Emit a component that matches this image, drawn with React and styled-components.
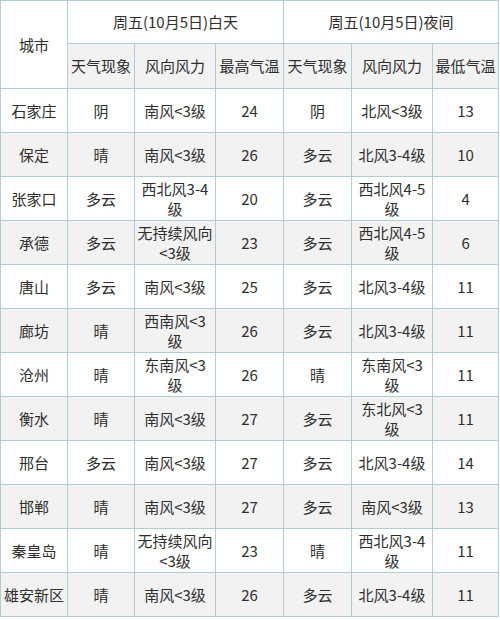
import React from 'react';
import styled, { createGlobalStyle } from 'styled-components';

const GlobalStyle = createGlobalStyle`
    html, body {
        margin: 0;
        padding: 0;
        background: #fff;
    }
`;

const Table = styled.table`
    border-collapse: collapse;
    table-layout: fixed;
    width: 498px;
    font-family: "Noto Sans CJK SC", "Noto Sans", sans-serif;
    font-size: 15px;
    color: #2e2e2e;
`;

const Row = styled.tr`
    height: ${props => props.$h}px;
    background: ${props => props.$grey ? '#f2f2f2' : '#fff'};
`;

const Cell = styled.td`
    border: 1px solid #b3ccd4;
    padding: 0;
    text-align: center;
    vertical-align: middle;
    line-height: 20px;
    white-space: pre-line;
`;

const HeadCell = styled(Cell).attrs({ as: 'th' })`
    font-weight: normal;
`;

const widths = [67, 67, 81, 68, 68, 81, 66];

const rows = [
    ['石家庄', '阴', '南风<3级', '24', '阴', '北风<3级', '13'],
    ['保定', '晴', '南风<3级', '26', '多云', '北风3-4级', '10'],
    ['张家口', '多云', '西北风3-4\n级', '20', '多云', '西北风4-5\n级', '4'],
    ['承德', '多云', '无持续风向\n<3级', '23', '多云', '西北风4-5\n级', '6'],
    ['唐山', '多云', '南风<3级', '25', '多云', '北风3-4级', '11'],
    ['廊坊', '晴', '西南风<3\n级', '26', '多云', '北风3-4级', '11'],
    ['沧州', '晴', '东南风<3\n级', '26', '晴', '东南风<3\n级', '11'],
    ['衡水', '晴', '南风<3级', '27', '多云', '东北风<3\n级', '11'],
    ['邢台', '多云', '南风<3级', '27', '多云', '北风3-4级', '14'],
    ['邯郸', '晴', '南风<3级', '27', '多云', '南风<3级', '13'],
    ['秦皇岛', '晴', '无持续风向\n<3级', '23', '晴', '西北风3-4\n级', '11'],
    ['雄安新区', '晴', '南风<3级', '26', '多云', '北风3-4级', '11'],
];

export default function App() {
    return (
        <>
            <GlobalStyle />
            <Table>
                <colgroup>
                    {widths.map((w, i) => <col key={i} style={{ width: w }} />)}
                </colgroup>
                <thead>
                    <Row $h={43}>
                        <HeadCell rowSpan={2}>城市</HeadCell>
                        <HeadCell colSpan={3}>周五(10月5日)白天</HeadCell>
                        <HeadCell colSpan={3}>周五(10月5日)夜间</HeadCell>
                    </Row>
                    <Row $h={45} $grey>
                        <HeadCell>天气现象</HeadCell>
                        <HeadCell>风向风力</HeadCell>
                        <HeadCell>最高气温</HeadCell>
                        <HeadCell>天气现象</HeadCell>
                        <HeadCell>风向风力</HeadCell>
                        <HeadCell>最低气温</HeadCell>
                    </Row>
                </thead>
                <tbody>
                    {rows.map((r, i) => (
                        <Row key={r[0]} $h={44} $grey={i % 2 === 1}>
                            {r.map((v, j) => <Cell key={j}>{v}</Cell>)}
                        </Row>
                    ))}
                </tbody>
            </Table>
        </>
    );
}
